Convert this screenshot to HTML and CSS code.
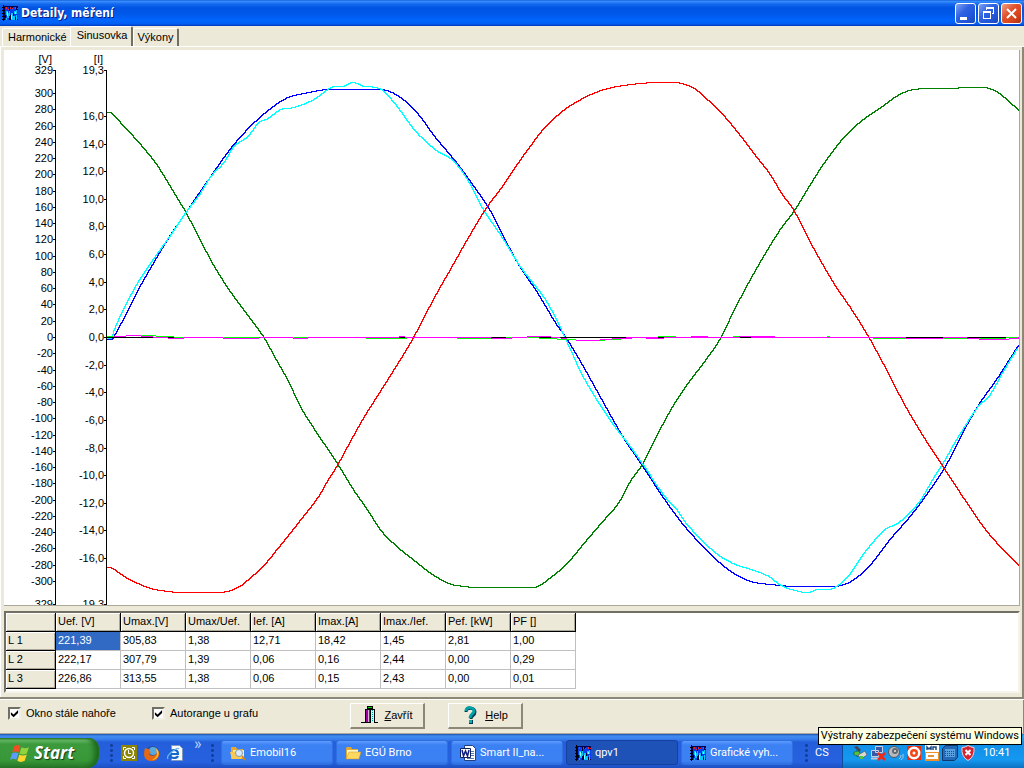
FILE: index.html
```html
<!DOCTYPE html>
<html lang="cs">
<head>
<meta charset="utf-8">
<title>Detaily, měření</title>
<link rel="stylesheet" href="styles.css">
</head>
<body>
<svg class="defs" aria-hidden="true">
  <symbol id="app" viewBox="0 0 16 16">
    <path fill="#000050" d="M2 1h14v14H2z"/>
    <path fill="#0a3cf0" d="M3 2h4v13H3zM8 4h3v11H8zM11 2h3v10h-3zM14 5h2v9h-2z"/>
    <path stroke="#000" d="M1.500 0v16M0 2.500h3M0 5.500h3M0 8.500h3M0 11.500h3M0 14.500h3"/>
    <path fill="#00c8ff" d="M4 6h2v4H4zM5 8h2v5H5zM7 6h1v5H7zM9 8h2v7H9zM12 6h2v3h-2zM14 5h1v4h-1zM11 11h2v4h-2zM14 10h1v5h-1zM4 13h1v2H4z"/>
    <path fill="#80ffff" d="M5 7h1v4H5zM9 10h1v4H9zM13 7h1v2h-1z"/>
    <path fill="#000030" d="M7 2h1v4H7zM8 10h1v5H8zM11 8h1v3h-1zM3 10h1v3H3zM13 12h1v3h-1z"/>
    <path fill="#ff2020" d="M4 2h1v2H4zM8 2h1v2H8zM6 4h1v1H6zM10 3h1v1h-1zM13 2h1v2h-1zM15 3h1v1h-1z"/>
  </symbol>
</svg>
<main class="window">
  <header class="titlebar">
    <svg class="icon"><use href="#app"/></svg>
    <h1 class="caption">Detaily, měření</h1>
    <button class="winbtn" aria-label="Minimalizovat"><svg viewBox="0 0 19 19"><path fill="#fff" d="M4 13h7v3H4z"/></svg></button>
    <button class="winbtn" aria-label="Obnovit"><svg viewBox="0 0 19 19"><path fill="#fff" fill-rule="evenodd" d="M7 3h8v7h-2V9h1V5H8v1H7zM4 7h8v8H4zM5 9v5h6V9z"/></svg></button>
    <button class="winbtn close" aria-label="Zavřít okno"><svg viewBox="0 0 19 19"><path stroke="#fff" stroke-width="2" d="M5 5l9 9M14 5l-9 9"/></svg></button>
  </header>
  <nav class="tabs" role="tablist">
    <button class="tab" role="tab">Harmonické</button>
    <button class="tab active" role="tab" aria-selected="true">Sinusovka</button>
    <button class="tab" role="tab">Výkony</button>
  </nav>
  <section class="page">
    <div class="chart">
      <svg id="plot" viewBox="4 50 1015 555" role="img" aria-label="Průběh napětí a proudu"></svg>
    </div>
  </section>
  <section class="values">
    <div class="sheet">
      <table>
        <thead><tr><th></th><th>Uef. [V]</th><th>Umax.[V]</th><th>Umax/Uef.</th><th>Ief. [A]</th><th>Imax.[A]</th><th>Imax./Ief.</th><th>Pef. [kW]</th><th>PF []</th></tr></thead>
        <tbody>
          <tr><th>L 1</th><td class="selected">221,39</td><td>305,83</td><td>1,38</td><td>12,71</td><td>18,42</td><td>1,45</td><td>2,81</td><td>1,00</td></tr>
          <tr><th>L 2</th><td>222,17</td><td>307,79</td><td>1,39</td><td>0,06</td><td>0,16</td><td>2,44</td><td>0,00</td><td>0,29</td></tr>
          <tr><th>L 3</th><td>226,86</td><td>313,55</td><td>1,38</td><td>0,06</td><td>0,15</td><td>2,43</td><td>0,00</td><td>0,01</td></tr>
        </tbody>
      </table>
    </div>
  </section>
  <footer class="controls">
    <label class="check"><input type="checkbox" checked><span>Okno stále nahoře</span></label>
    <label class="check"><input type="checkbox" checked><span>Autorange u grafu</span></label>
    <div class="actions">
      <button class="push">
        <svg class="icon" viewBox="0 0 18 18"><path fill="#000" d="M6 0h6v3H6z"/><path fill="#00e000" d="M7 1h4v1H7z"/><path fill="#000" d="M4 3h10v13h3v1h-4V5h-3v12H0v-1h4z"/><path fill="#a000a0" d="M5 4h4v12H5z"/><path fill="#d8b0d8" d="M7 4h1v12H7z"/><path fill="#b8ffff" d="M10 4h3v12h-3z"/><path stroke="#00a0a0" stroke-dasharray="1 1" d="M11.500 4v12"/></svg>
        <span><u>Z</u>avřít</span>
      </button>
      <button class="push">
        <svg class="icon" viewBox="0 0 18 18"><path fill="none" stroke="#003c50" stroke-width="3" d="M4 6c0-5 9-5 9 0 0 4-4 3-4 7"/><path fill="none" stroke="#00a0a8" stroke-width="3" d="M4 5c0-5 8-4 8 0 0 3-4 3-4 7"/><path fill="#003c50" d="M7 14h4v4H7z"/><path fill="#00b0b8" d="M7 14h3v3H7z"/></svg>
        <span><u>H</u>elp</span>
      </button>
    </div>
  </footer>
</main>
<footer class="taskbar">
  <button class="start">
    <svg class="flag" viewBox="0 0 20 20"><path fill="#f25022" d="M4 3q3-2 6 0L8 9q-3-2-6 0z"/><path fill="#8fd43c" d="M11 4q3 2 7 0l-2 6q-4 2-7 0z"/><path fill="#5c9cff" d="M2 10q3-2 6 0l-2 6q-3-2-6 0z"/><path fill="#ffd52e" d="M9 11q3 2 7 0l-2 6q-4 2-7 0z"/></svg>
    <span>Start</span>
  </button>
  <div class="quick">
    <i class="grip"></i>
    <svg class="icon" viewBox="0 0 16 16"><path fill="#8c8400" d="M0 0h16v16H0z"/><path fill="none" stroke="#fff" d="M2.500 5V2.500H5M11 2.500h2.500V5M13.500 11v2.500H11M5 13.500H2.500V11"/><circle cx="8" cy="8" r="4.500" fill="none" stroke="#fff" stroke-width="1.500"/><path fill="none" stroke="#fff" d="M7.500 5v3.500H10"/></svg>
    <svg class="icon" viewBox="0 0 16 16"><circle cx="8" cy="8" r="7" fill="#2850a0"/><circle cx="9" cy="6" r="4" fill="#58a8e0"/><path fill="#e86810" d="M1 3q2 1 4 1-1 2 2 3l-2 2q2 3 6 1 3-2 2-6 3 3 2 7-2 5-7 5-7 0-8-6Q0 6 1 3z"/><path fill="#ffc030" d="M12 3q4 4 2 8-2 4-6 4 4-2 5-5z"/></svg>
    <svg class="icon" viewBox="0 0 16 16"><path fill="#f4f8ff" stroke="#8098c0" d="M4.500.5h8l3 3v12h-11z"/><path fill="none" stroke="#1868c8" stroke-width="2.200" d="M3 9h8q0-4-4-4T3 9q0 4 4 4 3 0 4-2"/><path fill="none" stroke="#68b8f0" stroke-width="1.200" d="M1 14q-2-3 5-8 5-4 6-2"/></svg>
    <span class="more">»</span>
    <i class="grip"></i>
  </div>
  <nav class="tasks">
    <button class="task"><svg class="icon" viewBox="0 0 16 16"><path fill="#e8a830" d="M1 3q0-1 1-1h4l1 2h6v10H1z"/><path fill="#fff0a8" d="M3 5h11v8H3z"/><path fill="#f8c850" d="M0 7h4l1-1h7l-1 8H2z"/><circle cx="9" cy="8" r="3.500" fill="#d8ecff" stroke="#8898a8"/><path stroke="#c88820" stroke-width="2" d="M12 11l3 4"/></svg><span>Emobil16</span></button>
    <button class="task"><svg class="icon" viewBox="0 0 16 16"><path fill="#e0a830" d="M1 4q0-2 1-2h4l1 2h6v10H1z"/><path fill="#fff8c0" d="M2 5h11v8H2z"/><path fill="#ffd860" stroke="#c89020" stroke-width=".5" d="M4 7h12l-2 7H1z"/></svg><span>EGÚ Brno</span></button>
    <button class="task"><svg class="icon" viewBox="0 0 16 16"><path fill="#fff" stroke="#204080" d="M4.500.5h8l3 3v12h-11z"/><path stroke="#5878b0" d="M11 6.500h3M11 8.500h3M11 10.500h3M7 13.500h7"/><path fill="#fff" stroke="#102060" d="M.5 3.500h10v9H.5z"/><path fill="none" stroke="#102080" stroke-width="1.500" d="M2 5l1.500 6L5.500 6l2 5L9 5"/></svg><span>Smart II_na...</span></button>
    <button class="task pressed"><svg class="icon"><use href="#app"/></svg><span>qpv1</span></button>
    <button class="task"><svg class="icon"><use href="#app"/></svg><span>Grafické vyh...</span></button>
  </nav>
  <div class="lang"><i class="grip"></i><span>CS</span></div>
  <div class="tray">
    <svg class="icon" viewBox="0 0 16 16"><path fill="#445" d="M2 2l3-1 4 4-2 2z"/><path fill="#58c040" stroke="#186818" stroke-width=".7" d="M2 7h3V5l4 4-4 3v-2H2z"/><path fill="#d8dcd0" stroke="#556" stroke-width=".7" d="M6 10l7-4 2 4-6 4z"/><path fill="#58c040" d="M3 7h3v3H3zM8 11h3v3H8z"/></svg>
    <svg class="icon" viewBox="0 0 16 16"><path fill="#3858a8" stroke="#c8d0e8" d="M5.500 1.500h7v6h-7zM1.500 5.500h7v6h-7z"/><path stroke="#c0c8d8" stroke-width="2" d="M1 13.500h8"/><path stroke="#f02818" stroke-width="2.500" d="M8 8l7 7M15 8l-7 7"/></svg>
    <svg class="icon" viewBox="0 0 16 16"><circle cx="6" cy="7" r="5.500" fill="#b8bcc0" stroke="#505860"/><circle cx="7" cy="6" r="3" fill="#606870"/><circle cx="7" cy="6" r="1" fill="#e8e8e8"/><path fill="none" stroke="#a8c8e8" d="M11 14q2-1 2-4M13 15q3-2 2-6"/></svg>
    <svg class="icon" viewBox="0 0 16 16"><path fill="#e83010" d="M1 1h14v14H1z"/><circle cx="8" cy="8" r="6.500" fill="#fff"/><circle cx="8" cy="8" r="4" fill="#f04818"/><circle cx="8" cy="8" r="1.500" fill="#fff"/></svg>
    <svg class="icon" viewBox="0 0 16 16"><path fill="#fff" d="M1 0h14v15H1z"/><path fill="none" stroke="#204880" stroke-width="1.500" d="M3 5V2l2 2 2-2v3M9 5V2h3v3"/><path fill="#f09028" d="M1 7h14v1H1zM1 14h14v2H1zM1 8h1v6H1zM14 8h1v6h-1z"/><path stroke="#e09040" stroke-width="2" d="M4 11h6"/></svg>
    <svg class="icon" viewBox="0 0 16 16"><path fill="#2468b8" stroke="#103868" d="M3.500.5h12v12l-3 3H.5v-12z"/><path fill="#58a0e0" d="M3 4h10v8H3z"/><path stroke="#174f94" stroke-dasharray="1 1" d="M3 6.500h10M3 8.500h10M3 10.500h10"/></svg>
    <svg class="icon" viewBox="0 0 16 16"><path fill="#d82030" stroke="#f0d0d0" d="M8 .5q3 2 6 2 1 9-6 13Q1 11.500 2 2.500q3 0 6-2z"/><path stroke="#fff" stroke-width="2" d="M5.500 5l5 5M10.500 5l-5 5"/></svg>
    <time>10:41</time>
  </div>
  <div class="tooltip" role="tooltip">Výstrahy zabezpečení systému Windows</div>
</footer>
<script src="chart.js"></script>
</body>
</html>
```
FILE: styles.css
```css
* { box-sizing: border-box; }
body {
  margin: 0;
  min-height: 100vh;
  display: flex;
  flex-direction: column;
  background: #ece9d8;
  color: #000;
  font: 11px/13px "Liberation Sans", Arial, sans-serif;
}
button { font: inherit; color: inherit; margin: 0; padding: 0; white-space: nowrap; }
.defs { position: absolute; width: 0; height: 0; }
.icon { width: 16px; height: 16px; flex: none; }
.window { flex: 1; display: flex; flex-direction: column; }

.titlebar {
  height: 26px;
  display: flex;
  align-items: center;
  gap: 2px;
  padding: 0 2px;
  background: linear-gradient(#0a4fd0 0, #3c93ff 1px, #1468ee 4px, #0054e3 8px, #0058ea 14px, #0066ff 21px, #005cf0 24px, #0038b8 26px);
}
.caption {
  flex: 1;
  margin: 0 0 0 1px;
  color: #fff;
  font: bold 12px/16px "DejaVu Sans Condensed", "Noto Sans", sans-serif;
  text-shadow: 1px 1px #0a1883;
}
.winbtn {
  width: 21px;
  height: 21px;
  border: 1px solid #fff;
  border-radius: 3px;
  background: linear-gradient(135deg, #7fa3f5, #2f62e2 40%, #2257da 70%, #1a48b8);
}
.winbtn svg { display: block; width: 19px; height: 19px; }
.winbtn.close { background: linear-gradient(135deg, #f0a088, #e0532e 40%, #d8441c 70%, #a83010); }

.tabs { height: 20px; display: flex; align-items: flex-end; padding-left: 2px; }
.tab {
  height: 18px;
  padding: 0 3px;
  border: solid;
  border-width: 1px 2px 0 1px;
  border-color: #fff #716f64 #fff #fff;
  border-radius: 2px 2px 0 0;
  background: #ece9d8;
}
.tab:first-child { padding-left: 5px; border-right: 0; }
.tab.active { height: 20px; padding: 0 4px 3px 6px; }

.page { border-top: 1px solid #fff; padding: 3px 4px 0; box-shadow: inset 1px 0 #fff, inset -2px 0 #8c8878; }
.chart { border: solid #aca899; border-width: 0 1px 1px 0; background: #fff; }
.chart svg { display: block; width: 100%; height: auto; }
.axis { stroke: #000; shape-rendering: crispEdges; }
.scale { font: 11px "Liberation Sans", Arial, sans-serif; text-anchor: end; }
.wave { fill: none; stroke-width: 1; shape-rendering: crispEdges; }

.values { padding: 5px 4px 4px; border-bottom: 2px solid #8c8878; box-shadow: inset 1px 0 #fff, inset -2px 0 #8c8878; }
.sheet {
  min-height: 82px;
  border: 2px solid #716f64;
  border-color: #716f64 #f6f4ea #f6f4ea #716f64;
  background: #fff;
}
table { width: 570px; table-layout: fixed; border-collapse: separate; border-spacing: 0; }
th, td {
  height: 19px;
  padding: 0 0 1px 2px;
  border: solid #c0c0c0;
  border-width: 0 1px 1px 0;
  text-align: left;
  font-weight: normal;
}
th { border-color: #000; background: #ece9d8; box-shadow: inset 1px 1px #fff, inset -1px -1px #aca899; }
th:first-child { width: 50px; }
.selected { background: #316ac5; color: #fff; }

.controls {
  flex: 1;
  min-height: 35px;
  display: flex;
  align-items: center;
  padding-left: 8px;
  border-top: 1px solid #fff;
  border-bottom: 1px solid #aca899;
  box-shadow: inset -1px 0 #8c8878;
}
.check { width: 144px; display: flex; align-items: center; gap: 5px; padding-bottom: 6px; }
.check input {
  appearance: none;
  width: 13px;
  height: 13px;
  margin: 0;
  border: 2px solid;
  border-color: #716f64 #f1efe2 #f1efe2 #716f64;
  background: #fff;
  display: grid;
  place-content: center;
}
.check input:checked::before {
  content: "";
  width: 9px;
  height: 9px;
  background: #000;
  clip-path: polygon(10% 35%, 40% 60%, 90% 10%, 90% 45%, 40% 92%, 10% 65%);
}
.actions { display: flex; gap: 23px; margin-left: 54px; padding-bottom: 2px; }
.push {
  width: 75px;
  height: 26px;
  display: flex;
  align-items: center;
  justify-content: center;
  gap: 5px;
  border: solid;
  border-width: 1px 2px 2px 1px;
  border-color: #fff #8c8878 #8c8878 #fff;
  background: #ece9d8;
}
.push .icon { width: 18px; height: 18px; }

.taskbar {
  position: relative;
  height: 34px;
  display: flex;
  align-items: stretch;
  color: #fff;
  font: 11px/14px Roboto, "Noto Sans", sans-serif;
  background: linear-gradient(#1f4fb0 0, #3f8cf0 2px, #3a80ee 5px, #245edb 8px, #2661df 28px, #1d4fc0 34px);
}
.start {
  width: 99px;
  margin-top: 4px;
  display: flex;
  align-items: center;
  gap: 3px;
  padding-left: 10px;
  border: 0;
  border-radius: 0 10px 12px 0;
  background: linear-gradient(#2c7a2c 0, #70c070 2px, #3c9a3c 6px, #389838 22px, #2a7a2a 30px);
  box-shadow: inset -5px 0 5px #1f6a1f;
  font: italic bold 17px/20px "Open Sans", "Noto Sans", sans-serif;
  text-shadow: 1px 1px 1px #143c14;
}
.flag { width: 21px; height: 21px; }
.quick { display: flex; align-items: center; gap: 7px; padding: 3px 6px 0 10px; }
.grip {
  width: 5px;
  height: 20px;
  background: radial-gradient(circle, #123f9e 1px, transparent 2px) 0 0 / 5px 5px;
}
.more { width: 9px; align-self: flex-start; margin-left: 4px; font-size: 16px; color: #bcd4ff; }
.tasks { flex: 1; display: flex; gap: 3px; padding: 6px 0 3px; }
.task {
  flex: 0 1 112px;
  min-width: 0;
  display: flex;
  align-items: center;
  gap: 4px;
  padding-left: 8px;
  border: 1px solid #2f6fe0;
  border-radius: 3px;
  background: linear-gradient(#5c9cff, #3c81f3 4px, #3c81f3 20px, #3070e0);
  overflow: hidden;
}
.task.pressed { border-color: #1640a0; background: #1e52b7; }
.lang { display: flex; align-items: center; gap: 6px; width: 42px; padding: 3px 0 0 4px; flex: none; }
.tray {
  width: 182px;
  flex: none;
  display: flex;
  align-items: center;
  gap: 2px;
  padding: 3px 0 0 9px;
  border-left: 1px solid #0c4c9c;
  background: linear-gradient(#1080d0 0, #18b0f4 2px, #18a0f0 5px, #1290e8 9px, #1498f0 26px, #0c70c0 34px);
}
.tray time { margin-left: 5px; }
.tooltip {
  position: absolute;
  right: 2px;
  top: -7px;
  padding: 1px 2px;
  border: 1px solid #000;
  background: #ffffe1;
  color: #000;
  white-space: nowrap;
}
```
FILE: chart.js
```
const plot = document.getElementById("plot");
const NS = "http://www.w3.org/2000/svg";
const ZERO = 337;

function add(name, attrs, text) {
  const el = document.createElementNS(NS, name);
  for (const key in attrs) el.setAttribute(key, attrs[key]);
  if (text) el.textContent = text;
  plot.append(el);
}

function scale(x, title, values, perUnit, format) {
  add("text", { class: "scale", x: x - 3, y: 63 }, title);
  let d = `M${x + 0.5} 70V620`;
  for (const v of values) {
    const y = Math.round(ZERO - v * perUnit);
    d += `M${x - 2} ${y + 0.5}h2`;
    add("text", { class: "scale", x: x - 2, y: y + 4 }, format(v));
  }
  add("path", { class: "axis", d });
}

function range(limit, step, end) {
  const list = [end];
  for (let v = limit; v >= -limit; v -= step) list.push(v);
  list.push(-end);
  return list;
}

scale(55, "[V]", range(300, 20, 329), 0.813, v => String(v));
scale(106, "[I]", range(16, 2, 19.3), 13.82, v => v.toFixed(1).replace(".", ","));

// Smooth curve through the samples, drawn as whole-pixel steps.
function steps(text) {
  const p = text.split(" ").map(s => s.split(",").map(Number));
  const slope = p.map((_, i) => {
    const a = p[Math.max(i - 1, 0)], b = p[Math.min(i + 1, p.length - 1)];
    return (b[1] - a[1]) / (b[0] - a[0]);
  });
  let d = `M${p[0][0]} ${p[0][1] + 0.5}`;
  for (let i = 0; i < p.length - 1; i++) {
    const [x0, y0] = p[i], [x1, y1] = p[i + 1], w = x1 - x0;
    for (let x = x0 + 1; x <= x1; x++) {
      const t = (x - x0) / w, u = 1 - t;
      let y = (1 + 2 * t) * u * u * y0 + t * u * u * w * slope[i]
        + t * t * (3 - 2 * t) * y1 - t * t * u * w * slope[i + 1];
      y = Math.round(Math.min(Math.max(y, Math.min(y0, y1)), Math.max(y0, y1)));
      d += `H${x + 0.5}V${y + 0.5}`;
    }
  }
  return d;
}

const waves = [
  ["#00f", "107,339 111,339 127,310 137,290 150,267 168,237 185,212 207,180 233,144 260,116 285,98 303,93 327,89 380,89 393,93 407,103 420,117 433,135 457,164 473,186 488,208 500,231 517,263 537,293 555,323 565,337 573,350 583,367 603,403 623,438 640,463 663,498 683,525 710,554 730,571 750,581 770,584 793,586 833,586 850,581 868,566 890,538 910,515 930,488 945,465 963,430 978,404 997,377 1017,346 1019,345"],
  ["#008000", "107,112 110,112 124,127 137,141 155,163 167,182 176,197 185,212 200,241 214,267 230,292 247,315 263,337 273,355 287,380 300,407 313,428 337,464 353,490 367,510 380,530 397,547 412,559 430,573 448,583 463,586 478,587 533,587 550,577 567,562 583,543 600,523 618,502 630,480 642,463 657,433 673,404 687,383 703,362 720,337 733,310 750,278 765,252 780,228 793,211 807,188 823,163 843,137 860,121 880,107 897,95 913,89 948,88 983,87 997,92 1008,101 1017,109 1019,110"],
  ["#0ff", "107,338 111,337 113,330 123,308 137,282 153,258 168,237 185,212 198,195 210,176 223,162 233,146 247,136 258,122 267,118 280,109 293,107 313,99 327,89 333,86 342,86 352,82 363,86 375,87 383,91 397,107 413,129 427,143 437,151 452,160 467,180 483,210 500,235 520,267 543,297 555,318 563,335 570,350 580,372 595,398 613,425 627,443 642,464 663,495 675,508 687,525 713,551 732,563 750,569 768,576 780,585 798,591 807,592 817,589 832,588 847,576 863,553 883,530 898,522 918,502 933,477 942,463 957,437 978,405 988,396 1003,370 1017,347"],
  ["#f00", "107,567 110,567 125,577 137,583 150,588 167,591 180,592 220,592 237,587 250,577 263,565 277,548 297,523 317,497 327,480 337,464 350,440 363,417 380,390 397,363 412,338 433,298 450,268 467,238 485,208 500,188 517,163 527,149 543,128 560,112 573,103 590,94 607,88 630,84 655,82 675,82 692,87 703,96 720,112 737,132 753,153 770,175 780,192 793,210 810,243 833,283 850,308 868,337 887,372 903,403 920,432 942,466 963,498 983,527 1000,547 1018,565"]
];
for (const [stroke, points] of waves) {
  add("path", { class: "wave", stroke, d: steps(points) });
}

const idle = [
  ["#f0f", [[337, 107, 1019], [336, 114, 126], [335, 126, 141], [336, 141, 153], [338, 168, 184], [338, 223, 259], [338, 293, 308], [336, 399, 405], [338, 491, 512], [336, 527, 551], [338, 561, 567], [340, 576, 600], [339, 600, 612], [338, 612, 632], [338, 646, 664], [336, 691, 708], [336, 739, 775], [338, 906, 943], [338, 967, 979], [339, 979, 1009], [338, 1009, 1019]]],
  ["#000", [[337, 107, 153], [337, 168, 174], [337, 399, 405], [337, 491, 506], [337, 539, 551], [337, 560, 626], [337, 658, 664], [337, 740, 751], [337, 906, 943], [337, 967, 1006]]],
  ["#0f0", [[336, 107, 114], [335, 141, 156], [336, 156, 174], [337, 174, 184], [337, 223, 259], [337, 293, 308], [338, 366, 407], [338, 457, 491], [337, 506, 512], [337, 527, 539], [338, 539, 557], [339, 557, 576], [340, 600, 605], [339, 612, 621], [336, 658, 676], [336, 733, 739], [336, 827, 830], [338, 873, 906], [338, 943, 967], [338, 979, 1006], [337, 1006, 1018]]]
];
for (const [stroke, runs] of idle) {
  add("path", { class: "wave", stroke, d: runs.map(([y, a, b]) => `M${a} ${y + 0.5}H${b}`).join("") });
}
```
